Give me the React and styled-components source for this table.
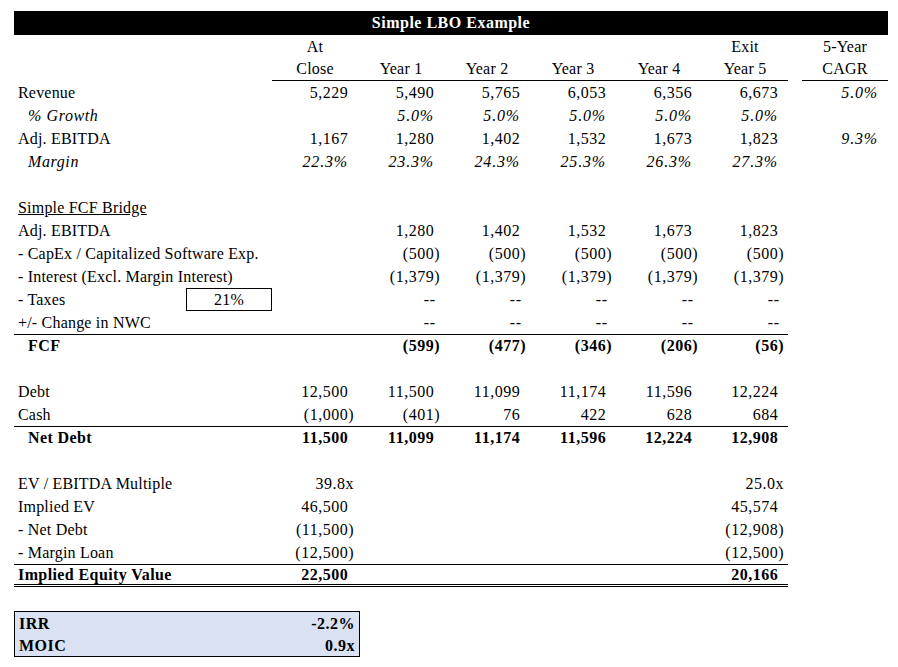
import React from 'react';
import styled, { createGlobalStyle } from 'styled-components';

const GlobalStyle = createGlobalStyle`
  body {
    margin: 0;
    background: #fff;
    font-family: "Liberation Serif", "Times New Roman", serif;
    color: #000;
  }
`;

const COLS = '172px 86px repeat(6, 86px) 14px 86px';

const Sheet = styled.div`
  width: 874px;
  padding: 11px 0 0 14px;
  font-size: 16px;
`;

const Title = styled.div`
  height: 24px;
  background: #000;
  color: #fff;
  font-weight: bold;
  letter-spacing: 0.5px;
  display: flex;
  align-items: flex-end;
  justify-content: center;
  padding-bottom: 3px;
  box-sizing: border-box;
  line-height: 18px;
`;

const Row = styled.div`
  display: grid;
  grid-template-columns: ${COLS};
  height: 23px;
`;

const spacing = (p) => {
  if (p.$num) return p.$italic ? '0.8px' : '0.5px';
  return p.$bold ? '0.4px' : p.$italic ? '0.6px' : '0.2px';
};

const Cell = styled.div`
  grid-column: span ${(p) => p.$span || 1};
  display: flex;
  align-items: flex-end;
  justify-content: ${(p) => p.$align || 'flex-end'};
  box-sizing: border-box;
  padding: 0 4px ${(p) => (p.$double ? '0' : '2px')} ${(p) => (p.$indent ? '14px' : '4px')};
  line-height: 18px;
  white-space: nowrap;
  letter-spacing: ${spacing};
  font-weight: ${(p) => (p.$bold ? 'bold' : 'normal')};
  font-style: ${(p) => (p.$italic ? 'italic' : 'normal')};
  text-decoration: ${(p) => (p.$underline ? 'underline' : 'none')};
  border-top: ${(p) => (p.$top ? '1px solid #000' : 'none')};
  border-bottom: ${(p) =>
    p.$double ? '3px double #000' : p.$bottom ? '1px solid #000' : 'none'};
`;

const InputBox = styled(Cell)`
  border: 1px solid #000;
  justify-content: center;
  padding-bottom: 1px;
`;

const Ghost = styled.span`
  visibility: hidden;
`;

const Summary = styled.div`
  width: 344px;
  margin-top: 24px;
  border: 1px solid #000;
  background: #d9e1f2;
  font-weight: bold;
  letter-spacing: 0.5px;
`;

const SummaryRow = styled.div`
  display: flex;
  justify-content: space-between;
  align-items: flex-end;
  height: 22px;
  padding: 0 4px 1px 4px;
  box-sizing: border-box;
  line-height: 18px;
`;

const five = (v) => [v, v, v, v, v];

const rows = [
  { label: 'Revenue', vals: ['5,229', '5,490', '5,765', '6,053', '6,356', '6,673'], cagr: '5.0%' },
  { label: '% Growth', indent: true, italic: true, vals: ['', ...five('5.0%')] },
  { label: 'Adj. EBITDA', vals: ['1,167', '1,280', '1,402', '1,532', '1,673', '1,823'], cagr: '9.3%' },
  { label: 'Margin', indent: true, italic: true, vals: ['22.3%', '23.3%', '24.3%', '25.3%', '26.3%', '27.3%'] },
  { blank: true },
  { label: 'Simple FCF Bridge', underline: true },
  { label: 'Adj. EBITDA', vals: ['', '1,280', '1,402', '1,532', '1,673', '1,823'] },
  { label: '- CapEx / Capitalized Software Exp.', vals: ['', ...five('(500)')] },
  { label: '- Interest (Excl. Margin Interest)', vals: ['', ...five('(1,379)')] },
  { label: '- Taxes', box: '21%', vals: ['', ...five('--')] },
  { label: '+/- Change in NWC', vals: ['', ...five('--')] },
  { label: 'FCF', bold: true, indent: true, top: true, vals: ['', '(599)', '(477)', '(346)', '(206)', '(56)'] },
  { blank: true },
  { label: 'Debt', vals: ['12,500', '11,500', '11,099', '11,174', '11,596', '12,224'] },
  { label: 'Cash', vals: ['(1,000)', '(401)', '76', '422', '628', '684'] },
  { label: 'Net Debt', bold: true, indent: true, top: true, vals: ['11,500', '11,099', '11,174', '11,596', '12,224', '12,908'] },
  { blank: true },
  { label: 'EV / EBITDA Multiple', vals: ['39.8x', '', '', '', '', '25.0x'] },
  { label: 'Implied EV', vals: ['46,500', '', '', '', '', '45,574'] },
  { label: '- Net Debt', vals: ['(11,500)', '', '', '', '', '(12,908)'] },
  { label: '- Margin Loan', vals: ['(12,500)', '', '', '', '', '(12,500)'] },
  { label: 'Implied Equity Value', bold: true, top: true, double: true, vals: ['22,500', '', '', '', '', '20,166'] },
];

// accounting format: positives leave room for the closing paren
function Num({ v }) {
  if (!v) return null;
  if (v.endsWith(')') || v.endsWith('x')) return <>{v}</>;
  if (v === '--') return <>{v}<Ghost>{'\u00a0'}</Ghost></>;
  return <>{v}<Ghost>)</Ghost></>;
}

function DataRow({ r }) {
  if (r.blank) return <Row />;
  const vals = r.vals || ['', '', '', '', '', ''];
  const line = { $top: r.top, $double: r.double };
  return (
    <Row>
      {r.box ? (
        <>
          <Cell $align="flex-start" {...line}>{r.label}</Cell>
          <InputBox>{r.box}</InputBox>
        </>
      ) : (
        <Cell
          $span={2}
          $align="flex-start"
          $indent={r.indent}
          $bold={r.bold}
          $italic={r.italic}
          $underline={r.underline}
          {...line}
        >
          {r.label}
        </Cell>
      )}
      {vals.map((v, i) => (
        <Cell key={i} $num $bold={r.bold} $italic={r.italic} {...line}>
          <Num v={v} />
        </Cell>
      ))}
      <Cell />
      <Cell $num $italic>
        <Num v={r.cagr} />
      </Cell>
    </Row>
  );
}

export default function App() {
  return (
    <>
      <GlobalStyle />
      <Sheet>
        <Title>Simple LBO Example</Title>
        <Row>
          <Cell $span={2} />
          <Cell $align="center">At</Cell>
          <Cell />
          <Cell />
          <Cell />
          <Cell />
          <Cell $align="center">Exit</Cell>
          <Cell />
          <Cell $align="center">5-Year</Cell>
        </Row>
        <Row>
          <Cell $span={2} />
          <Cell $align="center" $bottom>Close</Cell>
          {[1, 2, 3, 4, 5].map((y) => (
            <Cell key={y} $align="center" $bottom>Year {y}</Cell>
          ))}
          <Cell />
          <Cell $align="center" $bottom>CAGR</Cell>
        </Row>
        {rows.map((r, i) => (
          <DataRow key={i} r={r} />
        ))}
        <Summary>
          <SummaryRow>
            <span>IRR</span>
            <span>-2.2%</span>
          </SummaryRow>
          <SummaryRow>
            <span>MOIC</span>
            <span>0.9x</span>
          </SummaryRow>
        </Summary>
      </Sheet>
    </>
  );
}
